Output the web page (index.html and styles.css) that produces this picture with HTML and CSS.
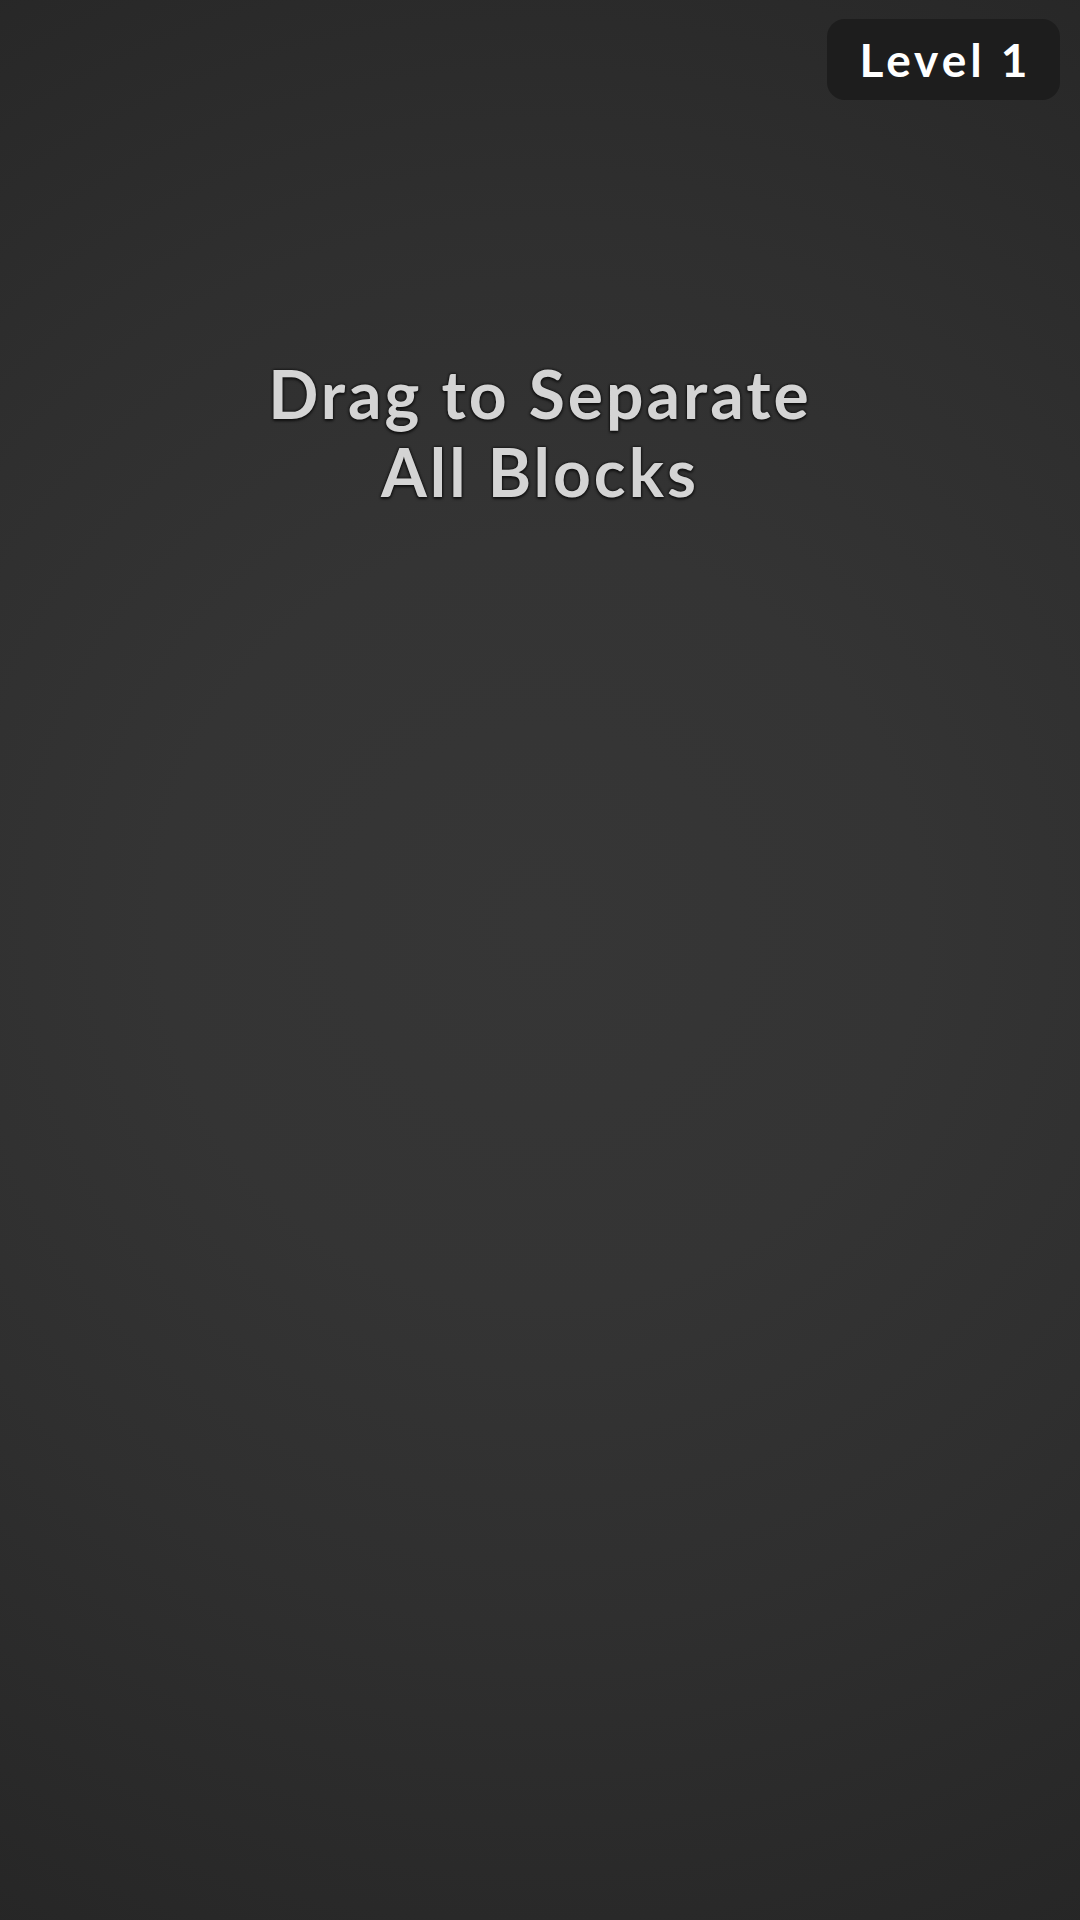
FILE: index.html
```html
<!DOCTYPE html>
<html lang="en">
<head>
<meta charset="utf-8">
<title>Drag to Separate</title>
<link rel="stylesheet" href="styles.css">
</head>
<body>
<div class="screen">
  <header class="topbar">
    <div class="level-badge">Level 1</div>
  </header>
  <h1 class="instruction">Drag to Separate<br>All Blocks</h1>
</div>
</body>
</html>
```
FILE: styles.css
```css
html, body {
  margin: 0;
  padding: 0;
  width: 1080px;
  height: 1920px;
  overflow: hidden;
}

.screen {
  width: 1080px;
  height: 1920px;
  box-sizing: border-box;
  display: flex;
  flex-direction: column;
  align-items: center;
  background: radial-gradient(circle at 50% 48%, #363636 0px, #343434 380px, #2f2f2f 700px, #2a2a2a 950px, #262626 1150px);
  font-family: Lato, "Open Sans", "DejaVu Sans", sans-serif;
}

.topbar {
  align-self: stretch;
  display: flex;
  justify-content: flex-end;
  padding: 19px 20px 0 0;
}

.level-badge {
  width: 233px;
  height: 81px;
  box-sizing: border-box;
  display: flex;
  align-items: center;
  justify-content: center;
  padding-left: 4px;
  background: #1d1d1d;
  border-radius: 18px;
  color: #ffffff;
  font-size: 46px;
  font-weight: 700;
  letter-spacing: 4px;
}

.instruction {
  margin: 255px 0 0;
  text-align: center;
  color: #d4d4d4;
  font-size: 66px;
  font-weight: 700;
  line-height: 78px;
  letter-spacing: 3px;
  text-shadow: 0 0 2px #111, 0 0 3px #111, 0 2px 3px rgba(0,0,0,0.6);
}
```
